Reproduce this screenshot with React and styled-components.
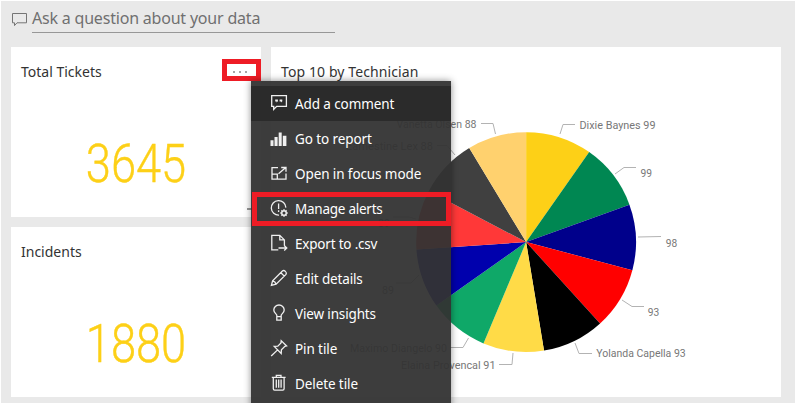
import React from 'react';
import styled, { createGlobalStyle, css } from 'styled-components';

const GlobalStyle = createGlobalStyle`
  * { box-sizing: border-box; }
  body { margin: 0; background: #fff; overflow: hidden; }
`;

const uiFont = css`
  font-family: 'Noto Sans', 'Open Sans', sans-serif;
  white-space: nowrap;
`;

const Page = styled.main`
  ${uiFont}
  position: relative;
  width: 795px;
  height: 403px;
  overflow: hidden;
  border-top: 1px solid #fff;
  border-left: 1px solid #fff;
  background: #e9e9e9;
`;

const QuestionBar = styled.header`
  display: flex;
  align-items: flex-start;
  height: 46px;
  padding: 5px 0 0 10px;
`;

const QuestionIcon = styled.svg`
  width: 18px;
  height: 18px;
  margin: 5px 3px 0 0;
  fill: none;
  stroke: #757575;
`;

const QuestionInput = styled.div`
  width: 303px;
  height: 27px;
  border-bottom: 1px solid #979797;
  color: #707070;
  font-size: 16px;
  line-height: 24px;
  letter-spacing: -0.2px;
`;

const Dashboard = styled.section`
  display: grid;
  grid-template-columns: 250px 510px;
  grid-template-rows: 170px 170px;
  gap: 10px;
  padding-left: 10px;
`;

const Tile = styled.article`
  position: relative;
  display: flex;
  flex-direction: column;
  background: #fff;
  grid-row: ${(p) => (p.$tall ? 'span 2' : 'auto')};
`;

const TileTitle = styled.h2`
  margin: 0;
  padding: 15px 0 0 10px;
  height: 45px;
  color: #333;
  font-size: 14px;
  font-weight: 400;
  line-height: 20px;
  letter-spacing: ${(p) => p.$spacing || 0}px;
`;

const CardValue = styled.div`
  margin-top: 41px;
  color: #fdd017;
  font-family: Roboto, sans-serif;
  font-size: 54.5px;
  font-weight: 300;
  line-height: 60px;
  text-align: center;
  transform: scaleX(0.83);
  -webkit-text-stroke: 0.4px #fdd017;
`;

const MoreButton = styled.button`
  position: absolute;
  top: 12px;
  right: 0;
  display: flex;
  justify-content: center;
  gap: 4px;
  width: 39px;
  height: 22px;
  padding: 7px 3px 0 0;
  border: 5px solid #ee1c25;
  background: #fff;
`;

const Dot = styled.i`
  width: 2px;
  height: 2px;
  background: #a6a6a6;
`;

const ResizeMark = styled.i`
  position: absolute;
  right: 8px;
  bottom: 7px;
  width: 6px;
  height: 2px;
  background: #999;
`;

const Chart = styled.svg`
  position: absolute;
  inset: 0;
  width: 510px;
  height: 350px;
  font-family: Roboto, sans-serif;
  font-size: 11px;
  fill: #777;
`;

const Leader = styled.polyline`
  fill: none;
  stroke: #b3b3b3;
`;

const Menu = styled.ul`
  position: absolute;
  top: 80px;
  left: 250px;
  width: 200px;
  height: 330px;
  margin: 0;
  padding: 5px 0 0;
  list-style: none;
  background: rgba(51, 51, 51, 0.95);
  box-shadow: 0 0 7px rgba(0, 0, 0, 0.45);
`;

const MenuItem = styled.li`
  position: relative;
  display: flex;
  align-items: center;
  gap: 7px;
  height: 35px;
  padding-left: 19px;
  color: #fff;
  font-size: 13.5px;
  letter-spacing: ${(p) => p.$spacing || 0}px;
  background: ${(p) => (p.$active ? '#2b2b2b' : 'transparent')};
  ${(p) =>
    p.$marked &&
    css`
      &::after {
        content: '';
        position: absolute;
        inset: 1px 0 0 1px;
        border: 5px solid #ee1c25;
      }
    `}
`;

const MenuIcon = styled.svg`
  flex: none;
  width: 18px;
  height: 20px;
  margin-top: 1px;
  fill: none;
  stroke: #f0f0f0;
  stroke-width: 1.3;
`;

const MenuLabel = styled.span`
  line-height: 20px;
  margin-top: 1px;
`;

const icons = {
  comment: (
    <>
      <path d="M1.7 1.7H16.4V12.3H6.7L3.7 15.4V12.3H1.7Z" />
      <path
        d="M5.2 5.4h2.7v1.8L6.6 8.6V7.4H5.2ZM9.6 5.4h2.7v1.8L11 8.6V7.4H9.6Z"
        fill="#f0f0f0"
        stroke="none"
      />
    </>
  ),
  report: (
    <path
      d="M.5 11.2h3V17h-3ZM4.5 8h3.1v9H4.5ZM8.7 3.6h3V17h-3ZM12.8 6.8h3.6V17h-3.6Z"
      fill="#f0f0f0"
      stroke="none"
    />
  ),
  focus: (
    <path d="M8 3.6H2V15.2H16V9.5M2 10.2H7.3V15.2M8.5 9.7L15.8 3.4M11.2 3.5H16V7.8" />
  ),
  alert: (
    <>
      <path d="M9 16.2A7.3 7.3 0 1 1 15.9 8.6M8.6 4.4V10M8.6 11.2V12.9" />
      <circle cx="14" cy="14" r="2.2" />
      <path
        strokeWidth="1.5"
        d="M14 10.3v1.6M14 16.1V17.7M10.3 14h1.6M16.1 14h1.6M11.4 11.4l1.1 1.1M15.5 15.5l1.1 1.1M16.6 11.4l-1.1 1.1M12.5 15.5l-1.1 1.1"
      />
    </>
  ),
  export: (
    <path d="M8.3 15.9H1.8V1.3H9.8L14.4 5.9V11.6M9.8 1.3V5.9H14.4M8.5 14H16.6M14.2 11.5L16.8 14L14.2 16.5" />
  ),
  edit: (
    <path d="M1.4 16.4L2.6 11.8L12.4 2Q13.8 .9 15.4 2.4T16 5.4L6.1 15.2ZM10.9 3.7L14.3 7.1M2.6 11.8Q5.4 12.4 6.1 15.2" />
  ),
  bulb: (
    <path d="M6.8 12.6V11.2C6.4 9.7 3.8 8.9 3.8 6A5.2 5 0 0 1 14.2 6C14.2 8.9 11.6 9.7 11.2 11.2V16.2H6.8V12.6H11.2" />
  ),
  pin: (
    <path d="M11.2 1.6L16.6 7L14.9 7.4L11.4 10.9L11.2 14.4L4.2 7.4L7.8 7.1L11 3.9ZM7.6 10.9L1.2 17" />
  ),
  trash: (
    <path d="M1.8 3.4H15.6M6.3 3.2V1.3H11V3.2M3.3 3.6V14.8Q3.3 16.1 4.6 16.1H12.8Q14.1 16.1 14.1 14.8V3.6M6.3 5.6V13.8M8.7 5.6V13.8M11.1 5.6V13.8" />
  ),
};

const menuItems = [
  { icon: 'comment', label: 'Add a comment', active: true, spacing: -0.1 },
  { icon: 'report', label: 'Go to report', spacing: -0.1 },
  { icon: 'focus', label: 'Open in focus mode', spacing: -0.1 },
  { icon: 'alert', label: 'Manage alerts', marked: true, spacing: -0.25 },
  { icon: 'export', label: 'Export to .csv', spacing: -0.2 },
  { icon: 'edit', label: 'Edit details', spacing: -0.15 },
  { icon: 'bulb', label: 'View insights', spacing: -0.15 },
  { icon: 'pin', label: 'Pin tile', spacing: -0.1 },
  { icon: 'trash', label: 'Delete tile', spacing: -0.1 },
];

const slices = [
  { value: 99, color: '#fdd017' },
  { value: 99, color: '#008752' },
  { value: 98, color: '#00008b' },
  { value: 93, color: '#ff0000' },
  { value: 93, color: '#000000' },
  { value: 91, color: '#ffdb47' },
  { value: 90, color: '#0fa868' },
  { value: 89, color: '#0000ad' },
  { value: 89, color: '#ff3838' },
  { value: 88, color: '#404040' },
  { value: 88, color: '#ffd16e' },
];

const labels = [
  { text: 'Dixie Baynes 99', x: 308.5, y: 82, width: 76, line: '289,87 292,77.5 304,77.5' },
  { text: '99', x: 369.5, y: 130, width: 11.5, line: '344,127 353,120.5 365,120.5' },
  { text: '98', x: 394.7, y: 200, width: 11.5, line: '367,190 390,189.5' },
  { text: '93', x: 376.7, y: 269, width: 11.5, line: '351,253 361,259.5 373,259.5' },
  { text: 'Yolanda Capella 93', x: 325.2, y: 310, width: 89.5, line: '304,296 308,306.5 321,306.5' },
  { text: 'Elaina Provencal 91', x: 130, y: 322, width: 94.5, line: '242,306 241,317.5 228,317.5' },
  { text: 'Maximo Diangelo 90', x: 79, y: 305, width: 97, line: '197.5,291 192,300.5 179,300.5' },
  { text: '89', x: 111, y: 247, width: 12, line: '148,228 140,236 125,236' },
  { text: '89', x: 107, y: 180, width: 12, line: '145,172 138,170 122,170' },
  { text: 'Earnestine Lex 88', x: 75, y: 103, width: 87, line: '184,108 176,98.5 166,98.5' },
  { text: 'Vanetta Olsen 88', x: 125.5, y: 80.5, width: 80, line: '224.5,87 222,76.5 210,76.5' },
];

function Pie({ cx, cy, r }) {
  const total = slices.reduce((sum, s) => sum + s.value, 0);
  let turn = 0;
  const point = (t) => {
    const a = t * 2 * Math.PI;
    return `${cx + r * Math.sin(a)} ${cy - r * Math.cos(a)}`;
  };
  return slices.map((s) => {
    const start = turn;
    turn += s.value / total;
    return (
      <path
        key={s.color}
        d={`M${cx} ${cy}L${point(start)}A${r} ${r} 0 0 1 ${point(turn)}Z`}
        fill={s.color}
      />
    );
  });
}

export default function App() {
  return (
    <>
      <GlobalStyle />
      <Page>
        <QuestionBar>
          <QuestionIcon viewBox="0 0 18 18">
            <path d="M1.5 2.5H15.5V11.8H6L3.5 14.6V11.8H1.5Z" />
          </QuestionIcon>
          <QuestionInput>Ask a question about your data</QuestionInput>
        </QuestionBar>
        <Dashboard>
          <Tile>
            <TileTitle>Total Tickets</TileTitle>
            <CardValue>3645</CardValue>
            <MoreButton aria-label="More options">
              <Dot />
              <Dot />
              <Dot />
            </MoreButton>
            <ResizeMark />
          </Tile>
          <Tile $tall>
            <TileTitle $spacing={0.1}>Top 10 by Technician</TileTitle>
            <Chart viewBox="0 0 510 350">
              <Pie cx={255.1} cy={195.1} r={109.9} />
              {labels.map((l) => (
                <React.Fragment key={l.x}>
                  <Leader points={l.line} />
                  <text x={l.x} y={l.y} textLength={l.width} lengthAdjust="spacingAndGlyphs">
                    {l.text}
                  </text>
                </React.Fragment>
              ))}
            </Chart>
          </Tile>
          <Tile>
            <TileTitle>Incidents</TileTitle>
            <CardValue>1880</CardValue>
          </Tile>
        </Dashboard>
        <Menu>
          {menuItems.map((m) => (
            <MenuItem key={m.label} $active={m.active} $marked={m.marked} $spacing={m.spacing}>
              <MenuIcon viewBox="0 0 18 20">{icons[m.icon]}</MenuIcon>
              <MenuLabel>{m.label}</MenuLabel>
            </MenuItem>
          ))}
        </Menu>
      </Page>
    </>
  );
}
